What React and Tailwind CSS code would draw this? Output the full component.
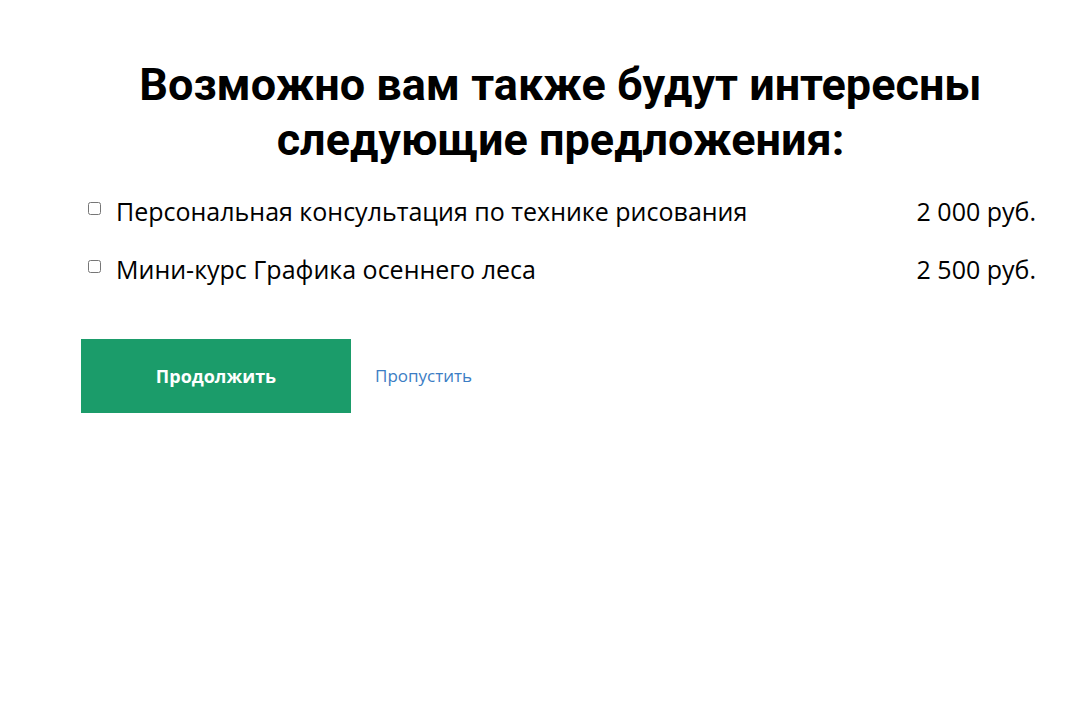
export default function App() {
  const items = [
    { name: "Персональная консультация по технике рисования", price: "2 000 руб." },
    { name: "Мини-курс Графика осеннего леса", price: "2 500 руб." },
  ];
  return (
    <div className="min-h-[714px] bg-white pt-[57px] pl-[81px] pr-[32px]" style={{ fontFamily: '"Open Sans", sans-serif' }}>
      <h1 className="text-center text-[45px] leading-[55px] font-bold text-black" style={{ fontFamily: 'Roboto, sans-serif' }}>
        Возможно вам также будут интересны
        <br />
        следующие предложения:
      </h1>
      <div className="mt-[27px] flex flex-col gap-[24px]">
        {items.map((it) => (
          <label key={it.name} className="flex items-center justify-between text-[25px] leading-[34px] text-black">
            <span className="flex items-center">
              <input type="checkbox" className="ml-[7px] mr-[15px] mb-[5px] h-[13px] w-[13px]" />
              <span>{it.name}</span>
            </span>
            <span className="mr-[4px]">{it.price}</span>
          </label>
        ))}
      </div>
      <div className="mt-[53px] flex items-center gap-[24px]">
        <button className="h-[74px] w-[270px] bg-[#1b9c6a] text-[18px] font-bold text-white">Продолжить</button>
        <a className="text-[17px] text-[#3b7dc4]">Пропустить</a>
      </div>
    </div>
  );
}
